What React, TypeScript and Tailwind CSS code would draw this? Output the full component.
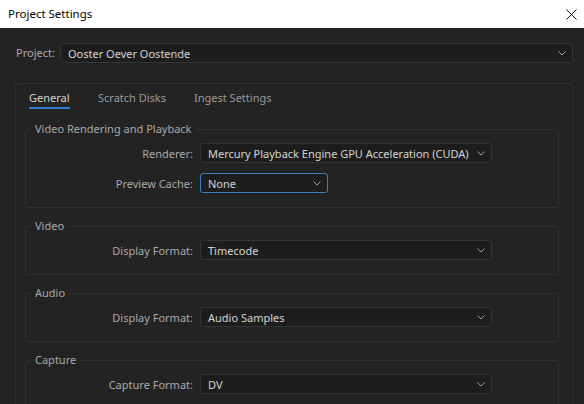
import { ReactNode } from "react";

const font = { fontFamily: '"Noto Sans", "Open Sans", sans-serif' };

const Chevron = () => (
  <svg width="8" height="5" viewBox="0 0 8 5" className="shrink-0">
    <path d="M0.5 0.5 L4 4 L7.5 0.5" fill="none" stroke="#a0a0a0" strokeWidth="1" />
  </svg>
);

const Select = ({ value, width, focused }: { value: string; width: string; focused?: boolean }) => (
  <div
    className={`flex items-center justify-between h-[20px] rounded-[3px] bg-[#1d1d1d] pl-[7px] pr-[6px] text-[11px] text-[#d4d4d4] border ${
      focused ? "border-[#3f7fc8]" : "border-[#343434]"
    } ${width}`}
  >
    <span className="leading-none">{value}</span>
    <Chevron />
  </div>
);

const Row = ({ label, children }: { label: string; children: ReactNode }) => (
  <div className="flex items-center">
    <span className="w-[167px] text-right text-[11px] text-[#a9a9a9] leading-none">{label}</span>
    <div className="ml-[7px]">{children}</div>
  </div>
);

const Group = ({ title, children, className }: { title: string; children: ReactNode; className?: string }) => (
  <fieldset className={`border border-[#323232] rounded-[3px] px-0 pt-[6px] pb-[14px] ${className ?? ""}`}>
    <legend className="ml-[5px] px-[4px] text-[11px] leading-[16px] text-[#a9a9a9]">{title}</legend>
    <div className="flex flex-col gap-[10px]">{children}</div>
  </fieldset>
);

export default function App() {
  return (
    <div className="w-[584px] h-[404px] overflow-hidden bg-[#232323] flex flex-col" style={font}>
      <div className="h-[28px] bg-white flex items-center justify-between pl-[8px] pr-[6px] shrink-0">
        <span className="text-[11.5px] text-black">Project Settings</span>
        <svg width="11" height="11" viewBox="0 0 11 11" className="mr-[1px]">
          <path d="M0.5 0.5 L10.5 10.5 M10.5 0.5 L0.5 10.5" stroke="#111" strokeWidth="1" />
        </svg>
      </div>

      <div className="flex-1 pt-[15px] pl-[15px] pr-[11px]">
        <div className="flex items-center pl-[1px]">
          <span className="w-[44px] text-[11px] text-[#a9a9a9]">Project:</span>
          <div className="flex-1">
            <div className="flex items-center justify-between h-[20px] rounded-[3px] bg-[#1d1d1d] border border-[#343434] pl-[7px] pr-[6px] text-[11px] text-[#d4d4d4]">
              <span className="leading-none">Ooster Oever Oostende</span>
              <Chevron />
            </div>
          </div>
        </div>

        <div className="mt-[20px] border border-[#303030] rounded-t-[3px] h-[400px]">
          <div className="flex gap-[28px] pl-[13px] pt-[6px]">
            <div className="flex flex-col items-start">
              <span className="text-[11px] text-[#d4d4d4] leading-[16px]">General</span>
              <div className="h-[2px] w-[41px] bg-[#2f7ad0] mt-[1px]" />
            </div>
            <span className="text-[11px] text-[#9a9a9a] leading-[16px]">Scratch Disks</span>
            <span className="text-[11px] text-[#9a9a9a] leading-[16px]">Ingest Settings</span>
          </div>

          <div className="pl-[9px] pr-[13px] mt-[12px] flex flex-col">
            <Group title="Video Rendering and Playback">
              <Row label="Renderer:">
                <Select value="Mercury Playback Engine GPU Acceleration (CUDA)" width="w-[292px]" />
              </Row>
              <Row label="Preview Cache:">
                <Select value="None" width="w-[128px]" focused />
              </Row>
            </Group>
            <Group title="Video" className="mt-[10px]">
              <Row label="Display Format:">
                <Select value="Timecode" width="w-[292px]" />
              </Row>
            </Group>
            <Group title="Audio" className="mt-[10px]">
              <Row label="Display Format:">
                <Select value="Audio Samples" width="w-[292px]" />
              </Row>
            </Group>
            <Group title="Capture" className="mt-[10px]">
              <Row label="Capture Format:">
                <Select value="DV" width="w-[292px]" />
              </Row>
            </Group>
          </div>
        </div>
      </div>
    </div>
  );
}
